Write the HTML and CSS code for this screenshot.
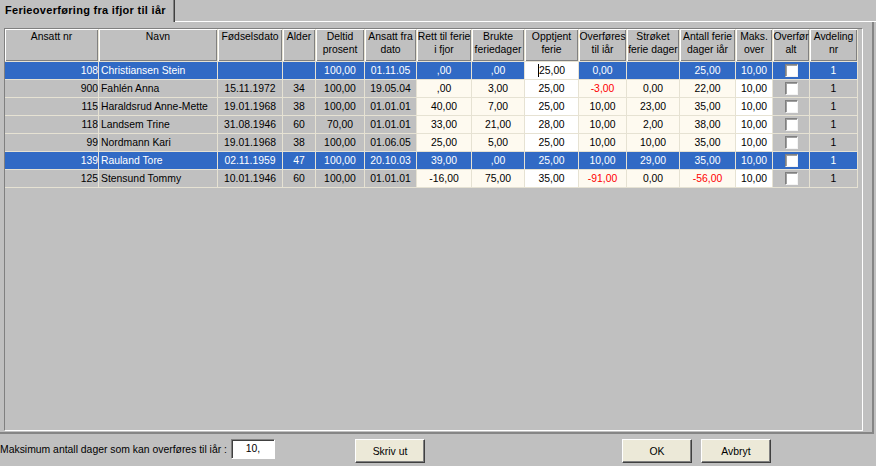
FILE: index.html
```html
<!DOCTYPE html>
<html>
<head>
<meta charset="utf-8">
<title>Ferieoverføring</title>
<link rel="stylesheet" href="styles.css">
</head>
<body>
<div class="tabbar">
  <div class="tab">Ferieoverføring fra ifjor til iår</div>
  <div class="tabrest"></div>
</div>
<div class="panel">
  <div class="grid">
    <table>
      <colgroup>
        <col class="w1"><col class="w2"><col class="w3"><col class="w4"><col class="w5">
        <col class="w6"><col class="w7"><col class="w8"><col class="w9"><col class="w10">
        <col class="w11"><col class="w12"><col class="w13"><col class="w14"><col class="w15">
      </colgroup>
      <tr class="head">
        <th>Ansatt nr</th><th>Navn</th><th>Fødselsdato</th><th>Alder</th>
        <th>Deltid<br>prosent</th><th>Ansatt fra<br>dato</th><th>Rett til ferie<br>i fjor</th>
        <th>Brukte<br>feriedager</th><th>Opptjent<br>ferie</th><th>Overføres<br>til iår</th>
        <th>Strøket<br>ferie dager</th><th>Antall ferie<br>dager iår</th><th>Maks.<br>over</th>
        <th>Overfør<br>alt</th><th>Avdeling<br>nr</th>
      </tr>
      <tr class="sel">
        <td class="r">108</td><td class="l">Christiansen Stein</td><td></td><td></td>
        <td>100,00</td><td>01.11.05</td><td class="c">,00</td><td class="c">,00</td>
        <td class="w edit"><span class="caret"></span>25,00</td><td class="c">0,00</td><td class="c"></td><td class="c">25,00</td>
        <td class="w">10,00</td><td><span class="cb"></span></td><td>1</td>
      </tr>
      <tr>
        <td class="r">900</td><td class="l">Fahlén Anna</td><td>15.11.1972</td><td>34</td>
        <td>100,00</td><td>19.05.04</td><td class="c">,00</td><td class="c">3,00</td>
        <td class="w">25,00</td><td class="c neg">-3,00</td><td class="c">0,00</td><td class="c">22,00</td>
        <td class="w">10,00</td><td><span class="cb"></span></td><td>1</td>
      </tr>
      <tr>
        <td class="r">115</td><td class="l">Haraldsrud Anne-Mette</td><td>19.01.1968</td><td>38</td>
        <td>100,00</td><td>01.01.01</td><td class="c">40,00</td><td class="c">7,00</td>
        <td class="w">25,00</td><td class="c">10,00</td><td class="c">23,00</td><td class="c">35,00</td>
        <td class="w">10,00</td><td><span class="cb"></span></td><td>1</td>
      </tr>
      <tr>
        <td class="r">118</td><td class="l">Landsem Trine</td><td>31.08.1946</td><td>60</td>
        <td>70,00</td><td>01.01.01</td><td class="c">33,00</td><td class="c">21,00</td>
        <td class="w">28,00</td><td class="c">10,00</td><td class="c">2,00</td><td class="c">38,00</td>
        <td class="w">10,00</td><td><span class="cb"></span></td><td>1</td>
      </tr>
      <tr>
        <td class="r">99</td><td class="l">Nordmann Kari</td><td>19.01.1968</td><td>38</td>
        <td>100,00</td><td>01.06.05</td><td class="c">25,00</td><td class="c">5,00</td>
        <td class="w">25,00</td><td class="c">10,00</td><td class="c">10,00</td><td class="c">35,00</td>
        <td class="w">10,00</td><td><span class="cb"></span></td><td>1</td>
      </tr>
      <tr class="sel">
        <td class="r">139</td><td class="l">Rauland Tore</td><td>02.11.1959</td><td>47</td>
        <td>100,00</td><td>20.10.03</td><td class="c">39,00</td><td class="c">,00</td>
        <td class="w">25,00</td><td class="c">10,00</td><td class="c">29,00</td><td class="c">35,00</td>
        <td class="w">10,00</td><td><span class="cb"></span></td><td>1</td>
      </tr>
      <tr>
        <td class="r">125</td><td class="l">Stensund Tommy</td><td>10.01.1946</td><td>60</td>
        <td>100,00</td><td>01.01.01</td><td class="c">-16,00</td><td class="c">75,00</td>
        <td class="w">35,00</td><td class="c neg">-91,00</td><td class="c">0,00</td><td class="c neg">-56,00</td>
        <td class="w">10,00</td><td><span class="cb"></span></td><td>1</td>
      </tr>
    </table>
  </div>
</div>
<div class="bottombar">
  <span class="lbl">Maksimum antall dager som kan overføres til iår :</span>
  <span class="field">10,</span>
  <button class="btn print">Skriv ut</button>
  <button class="btn ok">OK</button>
  <button class="btn cancel">Avbryt</button>
</div>
</body>
</html>
```
FILE: styles.css
```css
* { box-sizing: border-box; }
html, body { margin: 0; padding: 0; }
body {
  background: #c0c0c0;
  font-family: "Liberation Sans", Arial, sans-serif;
  font-size: 10.4px;
  color: #000;
  width: 876px;
  height: 466px;
  overflow: hidden;
}

/* tab strip */
.tabbar { display: flex; height: 22px; }
.tab {
  width: 175px;
  height: 22px;
  padding-left: 5px;
  font-weight: bold;
  font-size: 11px;
  letter-spacing: 0.3px;
  line-height: 20px;
  white-space: nowrap;
  border-right: 1px solid #404040;
  box-shadow: inset -1px 0 #808080;
}
.tabrest { flex: 1; height: 22px; border-bottom: 1px solid #fff; }

/* page panel */
.panel {
  width: 874px;
  height: 412px;
  padding: 6px 0 0 4px;
  border-right: 2px solid #858585;
  border-bottom: 2px solid #858585;
}
.grid {
  width: 859px;
  height: 403px;
  border: 1px solid;
  border-color: #808080 #fff #fff #808080;
  overflow: hidden;
}

table {
  table-layout: fixed;
  border-collapse: separate;
  border-spacing: 0;
  width: 853px;
}
.w1 { width: 94px; } .w2 { width: 119px; } .w3 { width: 65px; } .w4 { width: 33px; }
.w5 { width: 49px; } .w6 { width: 52px; } .w7 { width: 55px; } .w8 { width: 53px; }
.w9 { width: 54px; } .w10 { width: 48px; } .w11 { width: 53px; } .w12 { width: 56px; }
.w13 { width: 37px; } .w14 { width: 37px; } .w15 { width: 48px; }

th, td {
  border-right: 1px solid #e6e2d3;
  border-bottom: 1px solid #e6e2d3;
  white-space: nowrap;
  overflow: hidden;
  text-align: center;
}
th {
  height: 33px;
  padding: 1px 0 0;
  line-height: 13px;
  vertical-align: top;
  font-weight: normal;
  background: #c0c0c0;
  box-shadow: inset 1px 1px #fff, inset -1px -1px #808080;
}
td {
  height: 18px;
  padding: 0 1px;
  line-height: 17px;
  vertical-align: middle;
  background: #c0c0c0;
}
td.r { text-align: right; padding-right: 0; }
td.l { text-align: left; padding-left: 2px; }
td.c { background: #fefaf0; }
td.w { background: #fff; }
td.neg { color: #f00; }

tr.sel td { background: #316ac5; color: #fff; }
tr.sel td.edit { background: #fff; color: #000; }

.caret {
  display: inline-block;
  width: 1px;
  height: 13px;
  background: #000;
  vertical-align: -3px;
}
.cb {
  display: block;
  width: 13px;
  height: 13px;
  margin: 0 auto;
  background: #fff;
  border: 1px solid;
  border-color: #808080 #f4f4f4 #f4f4f4 #808080;
  box-shadow: inset 1px 1px #a0a0a0;
}

/* bottom bar */
.bottombar {
  display: flex;
  align-items: flex-start;
  height: 32px;
  padding-top: 5px;
}
.lbl {
  width: 231px;
  line-height: 22px;
  white-space: nowrap;
}
.field {
  width: 44px;
  height: 20px;
  line-height: 17px;
  text-align: center;
  background: #fff;
  border: 1px solid;
  border-color: #808080 #fff #fff #808080;
  box-shadow: inset 1px 1px #404040;
}
.btn {
  width: 70px;
  height: 24px;
  padding: 0;
  font-family: inherit;
  font-size: 10.4px;
  color: #000;
  background: #ece9d8;
  border: 1px solid;
  border-color: #fff #404040 #404040 #fff;
  box-shadow: inset -1px -1px #808080;
}
.print { margin-left: 80px; }
.ok { margin-left: 197px; }
.cancel { margin-left: 9px; }
```
